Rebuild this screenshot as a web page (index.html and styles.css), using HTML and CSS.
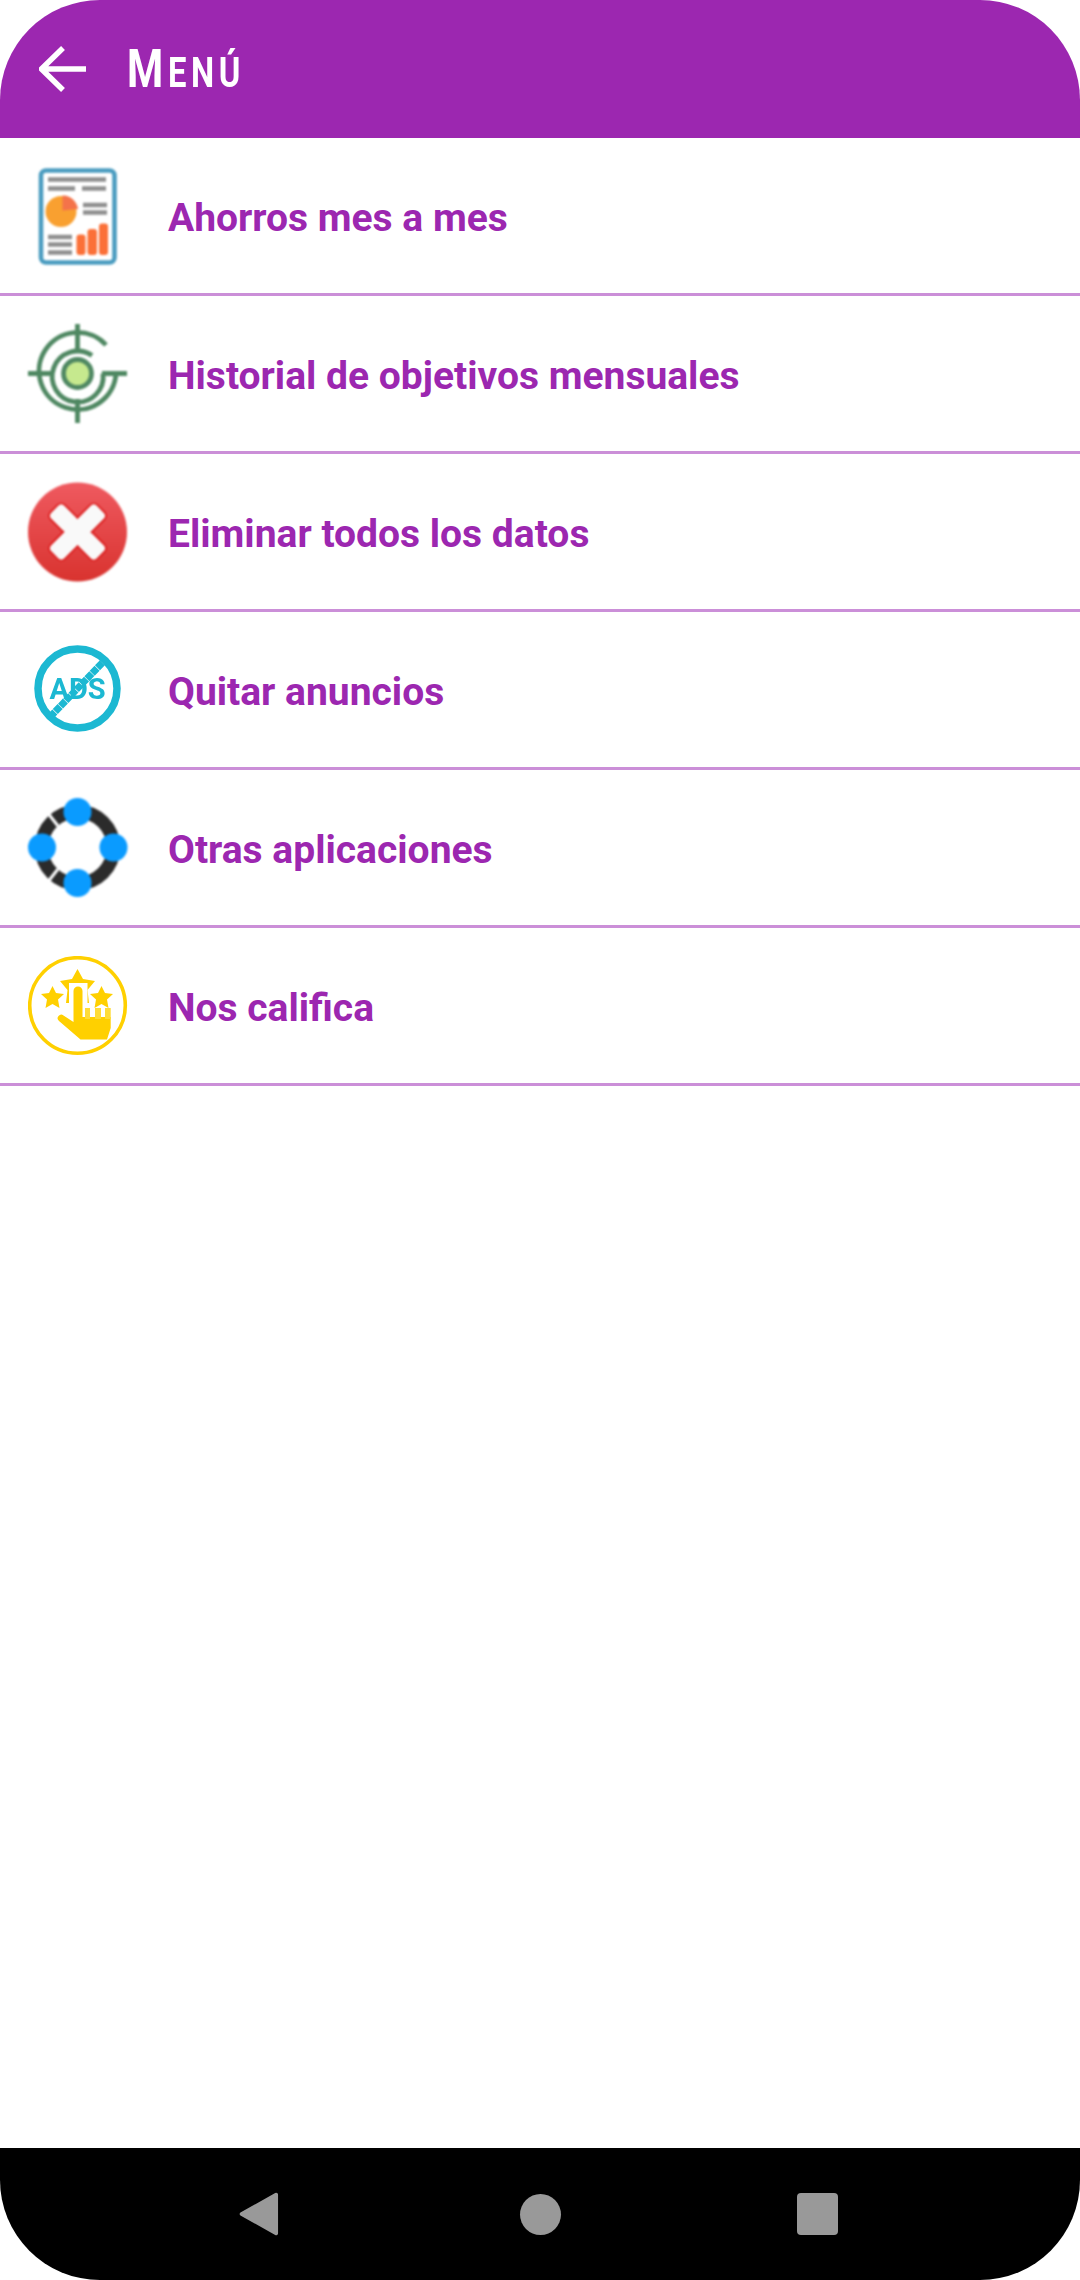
FILE: index.html
```html
<!DOCTYPE html>
<html lang="es">
<head>
<meta charset="utf-8">
<title>Menú</title>
<link rel="stylesheet" href="styles.css">
</head>
<body>
<div class="screen">
  <header class="appbar">
    <svg class="back" viewBox="0 0 48 48"><path d="M47 24H3M24 3 2.500 24 24 45" /></svg>
    <h1 class="title"><span class="title-cap">M</span><span class="title-rest">enú</span></h1>
  </header>
  <main class="menu">
    <div class="row">
      <svg class="icon" viewBox="0 0 100 100">
        <rect x="13" y="4.500" width="73.500" height="92" rx="5" fill="#fff" stroke="#4a9cc0" stroke-width="4.600"/>
        <g stroke="#8f8f8f" stroke-width="4.400" fill="none">
          <path d="M20 13.500H78M20 22.500H47M54 22.500H78M55 39H79M55 46.500H79M20 71H44M20 78.500H44M20 86.500H44"/>
        </g>
        <circle cx="33" cy="45.500" r="15.500" fill="#f9a030"/>
        <path d="M34.500 44.500V29.500C43 29 49 36 50 43Z" fill="#f4734a"/>
        <g fill="#fb7038">
          <rect x="48.500" y="68.500" width="9" height="20.500" rx="3"/>
          <rect x="59.500" y="63" width="9.500" height="26" rx="3"/>
          <rect x="71" y="57.500" width="9" height="31.500" rx="3"/>
        </g>
      </svg>
      <span class="label">Ahorros mes a mes</span>
    </div>
    <div class="row">
      <svg class="icon" viewBox="0 0 100 100">
        <g fill="none" stroke="#4f8862" stroke-width="4.800">
          <path d="M78 21A38.500 38.500 0 1 0 88 49.500"/>
          <path d="M64 31.500A25.500 25.500 0 1 0 75 49.500"/>
          <path d="M49.500 0V26M49.500 75V99M0 49.500H25M74 49.500H99"/>
          <circle cx="49.500" cy="49.500" r="14" fill="#c6e98e"/>
        </g>
      </svg>
      <span class="label">Historial de objetivos mensuales</span>
    </div>
    <div class="row">
      <svg class="icon" viewBox="0 0 100 100">
        <defs><linearGradient id="redfill" x1="0" y1="0" x2="0" y2="1"><stop offset="0" stop-color="#ef5a60"/><stop offset="1" stop-color="#d9332f"/></linearGradient></defs>
        <circle cx="49.500" cy="50" r="49.500" fill="url(#redfill)"/>
        <g transform="rotate(45 49.500 50)">
          <g fill="#f9f9f9" stroke="#dc1d1d" stroke-width="2">
            <rect x="16.500" y="40" width="66" height="20" rx="5"/>
            <rect x="39.500" y="17" width="20" height="66" rx="5"/>
          </g>
          <rect x="17.500" y="41" width="64" height="18" rx="4" fill="#f9f9f9"/>
          <rect x="40.500" y="18" width="18" height="64" rx="4" fill="#f9f9f9"/>
        </g>
      </svg>
      <span class="label">Eliminar todos los datos</span>
    </div>
    <div class="row">
      <svg class="icon icon-crisp" viewBox="0 0 100 100">
        <path d="M22 77 77 20" stroke="#1cb8d2" stroke-width="7" stroke-dasharray="7 0.600"/>
        <text class="ads" x="49.500" y="59">ADS</text>
        <circle cx="49.500" cy="48.500" r="39.500" fill="none" stroke="#1cb8d2" stroke-width="7.500"/>
      </svg>
      <span class="label">Quitar anuncios</span>
    </div>
    <div class="row">
      <svg class="icon" viewBox="0 0 100 100">
        <circle cx="49.500" cy="49.500" r="36" fill="none" stroke="#2b2b2b" stroke-width="13.500"/>
        <path d="M19 14 30 28M19 85 30 71" stroke="#fff" stroke-width="3"/>
        <g fill="#0a9bff">
          <circle cx="49.500" cy="14" r="14"/>
          <circle cx="14" cy="49.500" r="14"/>
          <circle cx="85.500" cy="49.500" r="14"/>
          <circle cx="49.500" cy="85" r="14"/>
        </g>
      </svg>
      <span class="label">Otras aplicaciones</span>
    </div>
    <div class="row">
      <svg class="icon icon-crisp" viewBox="0 0 100 100">
        <circle cx="49.500" cy="49.500" r="47.800" fill="none" stroke="#ffd000" stroke-width="3.600"/>
        <g fill="#ffd000">
          <path d="M49.500 13 55 23 67 25 59.500 34 61 47H38L39.500 34 32 25 44 23Z"/>
          <path d="M24.500 30 28 37 36 38 30 43.500 31.500 52 24.500 48 17.500 52 19 43.500 13 38 21 37Z"/>
          <path d="M73.500 30 77 37 85 38 79 43.500 80.500 52 73.500 48 66.500 52 68 43.500 62 38 70 37Z"/>
        </g>
        <rect x="41" y="27" width="18.500" height="27" fill="#fff"/>
        <path d="M45.500 35a4.500 4.500 0 0 1 9 0V61H82.700V72L79 83.500H52.500L31 65a3.500 3.500 0 0 1 4.500-5.500L45.500 66Z" fill="#ffd000"/>
        <path d="M57 52H62V63H57ZM67 52H73V63H67ZM77 52H82.700V63H77Z" fill="#ffdc38"/>
      </svg>
      <span class="label">Nos califica</span>
    </div>
  </main>
  <footer class="navbar">
    <svg class="nav-icon" viewBox="0 0 42 46"><path d="M38 1 1.500 21.500a2 2 0 0 0 0 3L38 45a2 2 0 0 0 3-1.500V2.500A2 2 0 0 0 38 1Z"/></svg>
    <span class="nav-home"></span>
    <span class="nav-recent"></span>
  </footer>
</div>
</body>
</html>
```
FILE: styles.css
```css
* { box-sizing: border-box; }
html, body { margin: 0; padding: 0; background: #fff; }
.screen {
  width: 1080px;
  height: 2280px;
  display: flex;
  flex-direction: column;
  background: #fff;
  overflow: hidden;
}
.appbar {
  height: 138px;
  flex: none;
  display: flex;
  align-items: center;
  gap: 40px;
  padding: 0 0 0 39px;
  background: #9c27b0;
  border-radius: 100px 100px 0 0;
}
.back {
  width: 48px;
  height: 48px;
  fill: none;
  stroke: #fff;
  stroke-width: 5.5;
}
.title {
  margin: 0;
  font-family: Roboto, sans-serif;
  font-weight: 700;
  color: #fff;
  line-height: 1;
  text-transform: uppercase;
  letter-spacing: 6px;
  transform: scaleX(0.78);
  transform-origin: left center;
  white-space: nowrap;
}
.title-cap { font-size: 53px; }
.title-rest { font-size: 42px; }
.menu { flex: 1; }
.row {
  height: 158px;
  display: flex;
  align-items: center;
  gap: 40px;
  padding-left: 28px;
  border-bottom: 3px solid #cb8fd8;
}
.icon {
  width: 100px;
  height: 100px;
  flex: none;
  filter: blur(0.9px);
}
.icon-crisp { filter: blur(0.5px); }
.ads {
  font-family: Roboto, sans-serif;
  font-size: 29px;
  font-weight: 700;
  fill: #1cb8d2;
  text-anchor: middle;
}
.label {
  font-family: Roboto, sans-serif;
  font-size: 39px;
  font-weight: 700;
  color: #9c27b0;
  margin-top: 4px;
}
.navbar {
  height: 132px;
  flex: none;
  display: flex;
  align-items: center;
  padding-left: 239px;
  background: #000;
  border-radius: 0 0 100px 100px;
}
.nav-icon { width: 40px; height: 46px; fill: #999; }
.nav-home { width: 41px; height: 41px; margin-left: 241px; border-radius: 50%; background: #999; }
.nav-recent { width: 41px; height: 42px; margin-left: 236px; border-radius: 4px; background: #999; }
```
